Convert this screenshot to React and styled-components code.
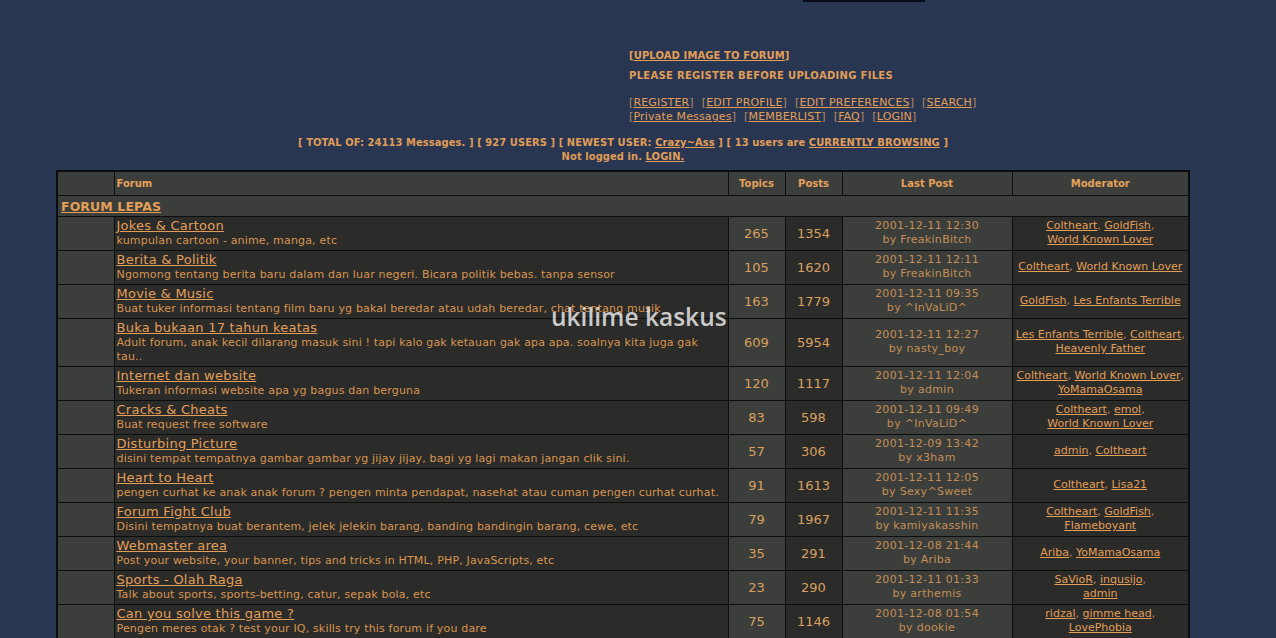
import React from 'react'
import styled, { createGlobalStyle } from 'styled-components'

const GlobalStyle = createGlobalStyle`
  body {
    margin: 0;
    background-color: #283651;
    font-family: "DejaVu Sans", Verdana, sans-serif;
    color: #e09d57;
  }
  a {
    color: #e39f58;
  }
`

const Page = styled.div`
  width: 1246px;
  position: relative;
  padding-bottom: 20px;
`

const Banner = styled.div`
  margin-left: 803px;
  width: 122px;
  height: 2px;
  background-color: #080b17;
`

const NavBlock = styled.div`
  margin-top: 47px;
  padding-left: 629px;
  font-size: 10px;
  line-height: 14px;
`

const Upload = styled.div`
  font-weight: bold;
  margin-bottom: 6px;
  letter-spacing: 0.1px;
`

const Warning = styled.div`
  font-weight: bold;
  margin-bottom: 13px;
  letter-spacing: 0.3px;
`

const LinkLine = styled.div`
  font-size: 11px;
  letter-spacing: 0.15px;
  white-space: nowrap;
  color: #b48a62;

  a {
    color: #e39f58;
  }
  span + span {
    margin-left: 8px;
  }
`

const Stats = styled.div`
  margin-top: 12px;
  text-align: center;
  font-family: "DejaVu Sans Condensed", "Liberation Sans", sans-serif;
  font-weight: bold;
  font-size: 11px;
  line-height: 14px;
  letter-spacing: 0.1px;
`

const Table = styled.table`
  margin: 6px auto 0;
  width: 1132px;
  border-collapse: collapse;
  border: 2px solid #0c0d0d;
  table-layout: fixed;
`

const Th = styled.th`
  height: 23px;
  padding: 0 2px;
  border: 1px solid #0c0d0d;
  background-color: #3b3e3a;
  font-size: 10px;
  font-weight: bold;
  text-align: ${p => (p.$left ? 'left' : 'center')};
  color: #e3a15c;
`

const CatCell = styled.td`
  height: 20px;
  padding: 0 3px;
  border: 1px solid #0c0d0d;
  background-color: #3b3e3a;
  line-height: 16px;

  a {
    font-size: 12.5px;
    font-weight: bold;
    letter-spacing: 0.1px;
  }
`

const Cell = styled.td`
  border: 1px solid #0c0d0d;
  background-color: ${p => (p.$dark ? '#2b2b2a' : '#3b3e3a')};
  padding: 1px 2px 2px;
  text-align: ${p => (p.$left ? 'left' : 'center')};
  vertical-align: middle;
  line-height: 14px;
`

const Title = styled.a`
  display: block;
  width: fit-content;
  font-size: 13px;
  line-height: 16px;
  letter-spacing: 0.25px;
`

const Desc = styled.div`
  font-size: 11px;
  line-height: 14px;
  letter-spacing: 0.17px;
  color: #d9954f;
`

const Count = styled.span`
  font-size: 13px;
  color: #d9a05f;
`

const LastPost = styled.div`
  font-size: 11px;
  line-height: 14px;
  letter-spacing: 0.3px;
  color: #c48e58;
  white-space: nowrap;
`

const Mods = styled.div`
  font-size: 11px;
  line-height: 14px;
  color: #c08a55;
  white-space: nowrap;
`

const Watermark = styled.div`
  position: absolute;
  left: 551px;
  top: 300px;
  font-family: "Open Sans", "DejaVu Sans", sans-serif;
  font-size: 24.5px;
  font-weight: 600;
  color: rgba(225, 225, 225, 0.88);
  pointer-events: none;
`

const forums = [
  { title: 'Jokes & Cartoon', desc: 'kumpulan cartoon - anime, manga, etc', topics: 265, posts: 1354, date: '2001-12-11 12:30', by: 'FreakinBitch', mods: [['Coltheart', 'GoldFish'], ['World Known Lover']] },
  { title: 'Berita & Politik', desc: 'Ngomong tentang berita baru dalam dan luar negeri. Bicara politik bebas. tanpa sensor', topics: 105, posts: 1620, date: '2001-12-11 12:11', by: 'FreakinBitch', mods: [['Coltheart', 'World Known Lover']] },
  { title: 'Movie & Music', desc: 'Buat tuker informasi tentang film baru yg bakal beredar atau udah beredar, chat tentang musik', topics: 163, posts: 1779, date: '2001-12-11 09:35', by: '^InVaLiD^', mods: [['GoldFish', 'Les Enfants Terrible']] },
  { title: 'Buka bukaan 17 tahun keatas', desc: 'Adult forum, anak kecil dilarang masuk sini ! tapi kalo gak ketauan gak apa apa. soalnya kita juga gak tau..', topics: 609, posts: 5954, date: '2001-12-11 12:27', by: 'nasty_boy', mods: [['Les Enfants Terrible', 'Coltheart'], ['Heavenly Father']] },
  { title: 'Internet dan website', desc: 'Tukeran informasi website apa yg bagus dan berguna', topics: 120, posts: 1117, date: '2001-12-11 12:04', by: 'admin', mods: [['Coltheart', 'World Known Lover'], ['YoMamaOsama']] },
  { title: 'Cracks & Cheats', desc: 'Buat request free software', topics: 83, posts: 598, date: '2001-12-11 09:49', by: '^InVaLiD^', mods: [['Coltheart', 'emol'], ['World Known Lover']] },
  { title: 'Disturbing Picture', desc: 'disini tempat tempatnya gambar gambar yg jijay jijay, bagi yg lagi makan jangan clik sini.', topics: 57, posts: 306, date: '2001-12-09 13:42', by: 'x3ham', mods: [['admin', 'Coltheart']] },
  { title: 'Heart to Heart', desc: 'pengen curhat ke anak anak forum ? pengen minta pendapat, nasehat atau cuman pengen curhat curhat.', topics: 91, posts: 1613, date: '2001-12-11 12:05', by: 'Sexy^Sweet', mods: [['Coltheart', 'Lisa21']] },
  { title: 'Forum Fight Club', desc: 'Disini tempatnya buat berantem, jelek jelekin barang, banding bandingin barang, cewe, etc', topics: 79, posts: 1967, date: '2001-12-11 11:35', by: 'kamiyakasshin', mods: [['Coltheart', 'GoldFish'], ['Flameboyant']] },
  { title: 'Webmaster area', desc: 'Post your website, your banner, tips and tricks in HTML, PHP, JavaScripts, etc', topics: 35, posts: 291, date: '2001-12-08 21:44', by: 'Ariba', mods: [['Ariba', 'YoMamaOsama']] },
  { title: 'Sports - Olah Raga', desc: 'Talk about sports, sports-betting, catur, sepak bola, etc', topics: 23, posts: 290, date: '2001-12-11 01:33', by: 'arthemis', mods: [['SaVioR', 'inqusijo'], ['admin']] },
  { title: 'Can you solve this game ?', desc: 'Pengen meres otak ? test your IQ, skills try this forum if you dare', topics: 75, posts: 1146, date: '2001-12-08 01:54', by: 'dookie', mods: [['ridzal', 'gimme head'], ['LovePhobia']] },
]

const ModList = ({ lines }) => (
  <Mods>
    {lines.map((line, li) => (
      <div key={li}>
        {line.map((name, i) => (
          <React.Fragment key={name}>
            <a href="#">{name}</a>
            {(i < line.length - 1 || li < lines.length - 1) && ', '}
          </React.Fragment>
        ))}
      </div>
    ))}
  </Mods>
)

const App = () => {
  return (
    <Page>
      <GlobalStyle />
      <Banner />
      <NavBlock>
        <Upload>[<a href="#">UPLOAD IMAGE TO FORUM</a>]</Upload>
        <Warning>PLEASE REGISTER BEFORE UPLOADING FILES</Warning>
        <LinkLine>
          <span>[<a href="#">REGISTER</a>]</span>
          <span>[<a href="#">EDIT PROFILE</a>]</span>
          <span>[<a href="#">EDIT PREFERENCES</a>]</span>
          <span>[<a href="#">SEARCH</a>]</span>
        </LinkLine>
        <LinkLine>
          <span>[<a href="#">Private Messages</a>]</span>
          <span>[<a href="#">MEMBERLIST</a>]</span>
          <span>[<a href="#">FAQ</a>]</span>
          <span>[<a href="#">LOGIN</a>]</span>
        </LinkLine>
      </NavBlock>

      <Stats>
        <div>
          [ TOTAL OF: 24113 Messages. ] [ 927 USERS ] [ NEWEST USER: <a href="#">Crazy~Ass</a> ] [ 13 users are <a href="#">CURRENTLY BROWSING</a> ]
        </div>
        <div>Not logged in. <a href="#">LOGIN.</a></div>
      </Stats>

      <Table>
        <colgroup>
          <col style={{ width: 57 }} />
          <col style={{ width: 614 }} />
          <col style={{ width: 57 }} />
          <col style={{ width: 57 }} />
          <col style={{ width: 170 }} />
          <col style={{ width: 177 }} />
        </colgroup>
        <thead>
          <tr>
            <Th />
            <Th $left>Forum</Th>
            <Th>Topics</Th>
            <Th>Posts</Th>
            <Th>Last Post</Th>
            <Th>Moderator</Th>
          </tr>
        </thead>
        <tbody>
          <tr>
            <CatCell colSpan={6}>
              <a href="#">FORUM LEPAS</a>
            </CatCell>
          </tr>
          {forums.map(f => (
            <tr key={f.title}>
              <Cell />
              <Cell $dark $left>
                <Title href="#">{f.title}</Title>
                <Desc>{f.desc}</Desc>
              </Cell>
              <Cell><Count>{f.topics}</Count></Cell>
              <Cell $dark><Count>{f.posts}</Count></Cell>
              <Cell>
                <LastPost>{f.date}</LastPost>
                <LastPost>by {f.by}</LastPost>
              </Cell>
              <Cell $dark>
                <ModList lines={f.mods} />
              </Cell>
            </tr>
          ))}
        </tbody>
      </Table>

      <Watermark>ukilime kaskus</Watermark>
    </Page>
  )
}

export default App
